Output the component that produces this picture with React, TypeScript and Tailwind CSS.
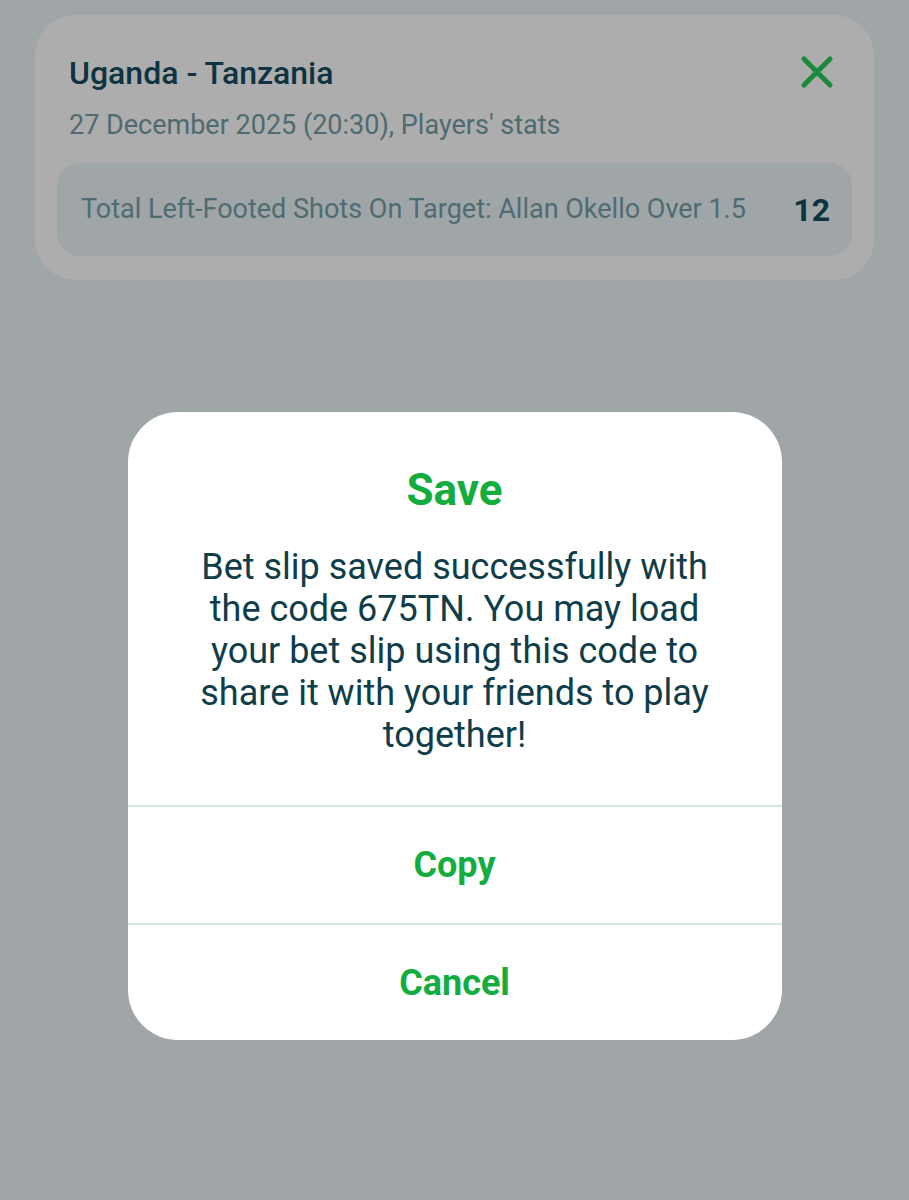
import { useState } from "react";

const font = { fontFamily: "Roboto, 'Noto Sans', sans-serif" };

export default function App() {
  const [copied, setCopied] = useState(false);

  return (
    <div className="min-h-[1200px] w-full bg-[#a0a5a8] pt-[15px]" style={font}>
      <section className="mx-[35px] rounded-[40px] bg-[#adadad] px-[22px] pb-[24px] pt-[40px]">
        <div className="flex items-start justify-between pl-[12px] pr-[18px]">
          <div>
            <h1 className="text-[32px] font-medium leading-[36px] text-[#0d3440]">Uganda - Tanzania</h1>
            <p className="mt-[18px] text-[27px] leading-[32px] text-[#4f6a70]">27 December 2025 (20:30), Players' stats</p>
          </div>
          <svg width="34" height="34" viewBox="0 0 34 34" className="mt-[0px]">
            <path d="M4 4 L30 30 M30 4 L4 30" stroke="#1b8a3b" strokeWidth="5" strokeLinecap="round" />
          </svg>
        </div>
        <div className="mt-[22px] flex h-[93px] items-center justify-between rounded-[22px] bg-[#a0a5a8] pl-[24px] pr-[22px]">
          <span className="text-[27px] text-[#4f6c72]">Total Left-Footed Shots On Target: Allan Okello Over 1.5</span>
          <span className="text-[32px] font-bold text-[#0d3440]">12</span>
        </div>
      </section>

      <div className="mx-auto mt-[132px] w-[654px] overflow-hidden rounded-[50px] bg-white">
        <div className="px-[40px] pb-[49px] pt-[52px] text-center">
          <h2 className="text-[44px] font-bold leading-[52px] text-[#13ad3f]">Save</h2>
          <p className="mx-auto mt-[30px] w-[540px] text-[36px] leading-[42px] text-[#0f3d4a]">
            Bet slip saved successfully with the code 675TN. You may load your bet slip using this code to share it
            with your friends to play together!
          </p>
        </div>
        <button
          type="button"
          onClick={() => setCopied(true)}
          className="flex h-[118px] w-full items-center justify-center border-t-2 border-[#d6e4e4] text-[36px] font-bold text-[#13ad3f]"
        >
          {copied ? "Copy" : "Copy"}
        </button>
        <button
          type="button"
          className="flex h-[117px] w-full items-center justify-center border-t-2 border-[#d6e4e4] text-[36px] font-bold text-[#13ad3f]"
        >
          Cancel
        </button>
      </div>
    </div>
  );
}
